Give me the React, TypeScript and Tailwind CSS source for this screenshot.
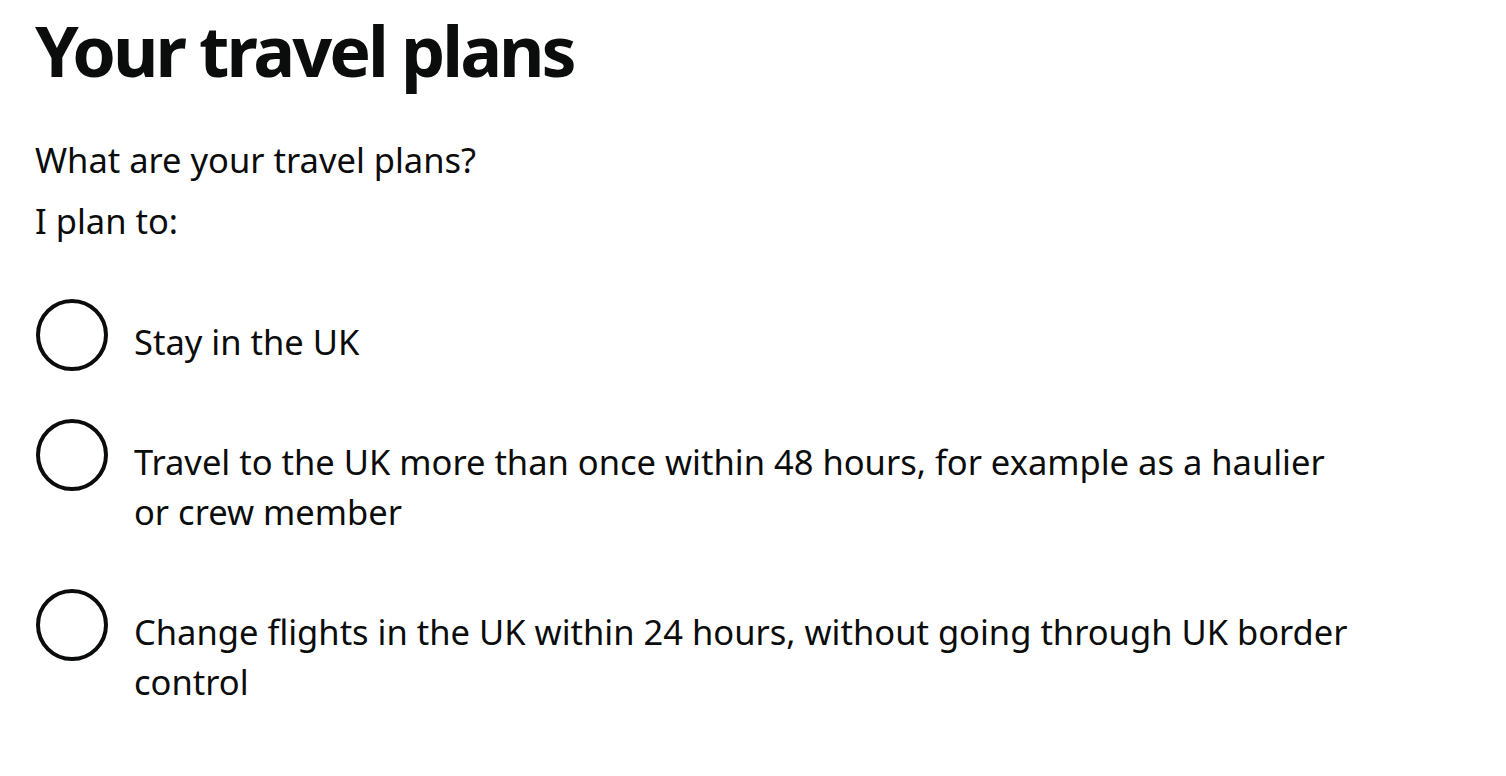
import React from 'react';

const options: string[] = [
  'Stay in the UK',
  'Travel to the UK more than once within 48 hours, for example as a haulier or crew member',
  'Change flights in the UK within 24 hours, without going through UK border control',
];

const App: React.FC = () => {
  return (
    <div className="min-h-screen bg-white text-[#0b0c0c] px-[35px] pt-[5px]" style={{ fontFamily: '"Noto Sans", Arial, sans-serif' }}>
      <h1 className="text-[70px] font-bold leading-[90px] tracking-[-3px]">Your travel plans</h1>

      <fieldset className="mt-[40px]">
        <legend className="text-[34.5px] leading-[50px]">What are your travel plans?</legend>
        <p className="text-[34.5px] leading-[50px] mt-[11px]">I plan to:</p>

        <div className="mt-[53px] flex flex-col gap-[45px]">
          {options.map((label, i) => (
            <label key={i} className="flex items-start gap-[26px] cursor-pointer">
              <input type="radio" name="plans" className="sr-only" />
              <span className="ml-px w-[72px] h-[72px] shrink-0 rounded-full border-[4px] border-[#0b0c0c]" />
              <span className="max-w-[1223px] text-[34.5px] leading-[50px] pt-[18px] pb-[7px]">{label}</span>
            </label>
          ))}
        </div>
      </fieldset>
    </div>
  );
};

export default App;
